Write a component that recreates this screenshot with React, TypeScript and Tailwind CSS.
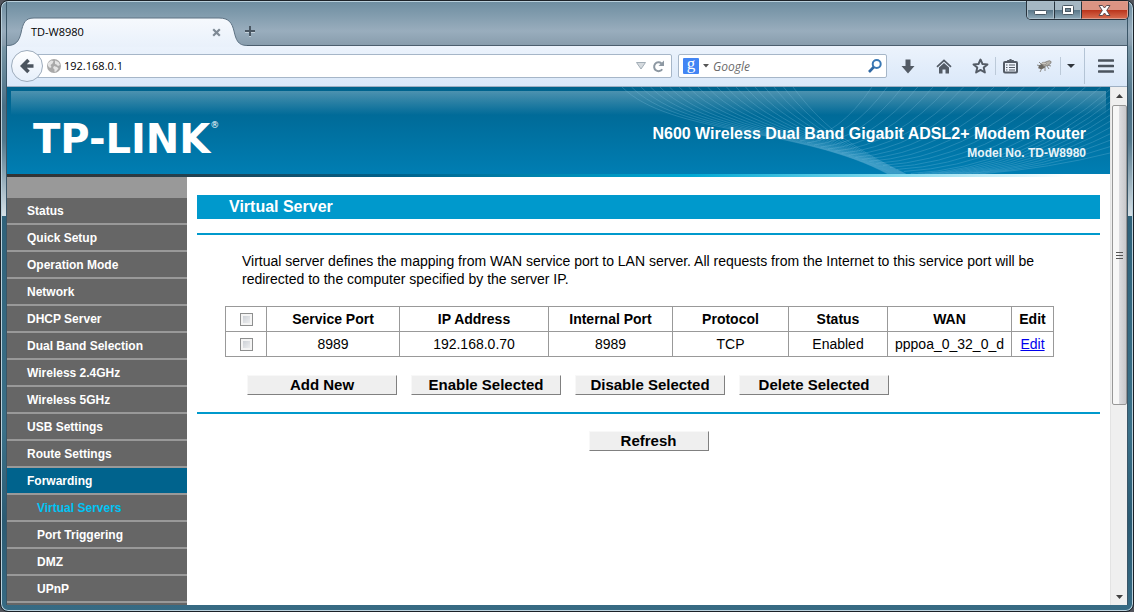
import type { ReactNode } from "react";

const menu = [
  "Status",
  "Quick Setup",
  "Operation Mode",
  "Network",
  "DHCP Server",
  "Dual Band Selection",
  "Wireless 2.4GHz",
  "Wireless 5GHz",
  "USB Settings",
  "Route Settings",
  "Forwarding",
];
const submenu = ["Virtual Servers", "Port Triggering", "DMZ", "UPnP"];

function TitleBar() {
  return (
    <div className="flex h-11 shrink-0 items-end">
      <div className="relative flex h-7 w-[238px] shrink-0 items-center">
        <svg className="absolute -bottom-px left-0" width="240" height="30" viewBox="0 0 240 30" aria-hidden="true">
          <defs>
            <linearGradient id="tab" x1="0" y1="0" x2="0" y2="1">
              <stop offset="0" stopColor="#f6f9fd" />
              <stop offset="1" stopColor="#e9f1fb" />
            </linearGradient>
          </defs>
          <path d="M0 29C9 29 12 24 14 16C16 6 18 1 27 1H212C222 1 225 6 227 14C229 23 231 28.500 240 28.500V30H0Z" fill="url(#tab)" />
          <path d="M0 28.500C9 28.500 12 24 14 16C16 6 18 1 27 1H212C222 1 225 6 227 14C229 23 231 28.500 240 28.500" fill="none" stroke="#5e7384" strokeWidth="1" />
        </svg>
        <span className="relative flex-1 pl-6 text-[11px] text-black">TD-W8980</span>
        <button aria-label="Close tab" className="relative mr-6">
          <svg width="9" height="9" viewBox="0 0 9 9">
            <path d="M1.200 1.200L7.800 7.800M7.800 1.200L1.200 7.800" stroke="#7f8a95" strokeWidth="2.200" />
          </svg>
        </button>
      </div>
      <div className="flex h-7 flex-1 items-center border-b border-[#4b5e6e]">
        <button aria-label="New tab">
          <svg width="10" height="11" viewBox="0 0 10 11">
            <path d="M5 1V11M0 6H10" stroke="#c3d0da" strokeWidth="2" />
            <path d="M5 0V10M0 5H10" stroke="#4a5763" strokeWidth="2" />
          </svg>
        </button>
      </div>
    </div>
  );
}

function WindowButtons() {
  return (
    <div className="absolute right-1 top-0 flex h-[19px] overflow-hidden rounded-b-[5px] border border-t-0 border-[#27333d]">
      <button aria-label="Minimize" className="flex w-[27px] items-end justify-center border border-[#a9bcc8] bg-linear-to-b from-[#a5b7c3] from-50% via-[#587587] via-50% to-[#8aa5b4] pb-[3px]">
        <svg width="13" height="5" viewBox="0 0 13 5"><rect x=".5" y=".5" width="12" height="4" rx="1" fill="#fff" stroke="#4a5964" /></svg>
      </button>
      <button aria-label="Maximize" className="flex w-[27px] items-center justify-center border border-l-[#27333d] border-[#a9bcc8] bg-linear-to-b from-[#a5b7c3] from-50% via-[#587587] via-50% to-[#8aa5b4]">
        <svg width="12" height="10" viewBox="0 0 12 10">
          <rect x=".5" y=".5" width="11" height="9" rx="1" fill="#fff" stroke="#4a5964" />
          <rect x="3.500" y="3.500" width="5" height="3" fill="#718897" stroke="#4a5964" />
        </svg>
      </button>
      <button aria-label="Close" className="flex w-[47px] items-center justify-center border border-l-[#27333d] border-[#dd9c8c] bg-linear-to-b from-[#dc9483] from-50% via-[#b93219] via-50% to-[#d5674b]">
        <svg width="13" height="11" viewBox="0 0 13 11">
          <path d="M1 .5H4.500L6.500 3L8.500 .5H12L8.700 5.500L12 10.500H8.500L6.500 8L4.500 10.500H1L4.300 5.500Z" fill="#fff" stroke="#5b4a4d" />
        </svg>
      </button>
    </div>
  );
}

function Sep({ tall = false }: { tall?: boolean }) {
  return <span className={tall ? "h-9 w-px shrink-0 bg-[#b4c4d5]" : "h-[18px] w-px shrink-0 bg-[#bccad9]"} />;
}

function Tool({ label, className, children }: { label: string; className: string; children: ReactNode }) {
  return (
    <button aria-label={label} className={"flex h-7 shrink-0 items-center justify-center " + className}>
      {children}
    </button>
  );
}

function Toolbar() {
  return (
    <div className="flex h-[41px] shrink-0 items-center border-b border-[#9fb0c3] bg-linear-to-b from-[#ecf3fc] to-[#dae8f9] pl-1">
      <button aria-label="Back" className="z-10 flex size-8 shrink-0 items-center justify-center rounded-full border border-[#9dacbc] bg-linear-to-b from-white to-[#e6effa]">
        <svg width="14" height="16" viewBox="0 0 14 16">
          <path d="M8.500 2L2.500 8L8.500 14M3 8H13.500" fill="none" stroke="#4b545e" strokeWidth="3.600" />
        </svg>
      </button>
      <div className="-ml-2 flex h-6 flex-1 items-center rounded-r-[2px] border border-[#a6b6c8] bg-white pl-[11px] pr-1.5">
        <svg width="14" height="14" viewBox="0 0 14 14" aria-hidden="true">
          <circle cx="7" cy="7" r="7" fill="#a9a9a9" />
          <path d="M1 4L4 1.500L6.500 2L5.500 4.500L3.500 6L4.500 8L3 9L1 7ZM8 1.500L11.500 3L13 6L11 7L9.500 5.500L8 5ZM7 7L10 8L11.500 9.500L9 12.500L7.500 13L7.500 10.500L6 9Z" fill="#e4e4e4" />
        </svg>
        <input aria-label="Address" defaultValue="192.168.0.1" className="ml-[3px] min-w-0 flex-1 bg-transparent text-[11px] text-black outline-none" />
        <svg width="10" height="8" viewBox="0 0 10 8" aria-hidden="true">
          <path d="M.5 .5H9.500L5 7Z" fill="#d5dade" stroke="#a2adb6" />
        </svg>
        <button aria-label="Reload" className="ml-1.5">
          <svg width="13" height="13" viewBox="0 0 13 13">
            <path d="M10.200 9.200A4.400 4.400 0 1 1 9.500 3.500" fill="none" stroke="#8d98a2" strokeWidth="2" />
            <path d="M12 .5V6H6.500Z" fill="#8d98a2" />
          </svg>
        </button>
      </div>
      <div className="ml-1.5 flex h-6 w-[209px] shrink-0 items-center rounded-[2px] border border-[#a6b6c8] bg-white px-1">
        <span className="flex size-4 shrink-0 items-center justify-center rounded-[1px] bg-[#4285f4] pb-1 font-['Liberation_Serif',serif] text-[17px] leading-4 text-white">g</span>
        <svg className="ml-1" width="6" height="4" viewBox="0 0 6 4" aria-hidden="true"><path d="M0 0H6L3 3.500Z" fill="#555" /></svg>
        <input aria-label="Search" placeholder="Google" className="ml-1 min-w-0 flex-1 bg-transparent pt-0.5 text-[12px] italic outline-none placeholder:text-[#6b6b6b]" />
        <button aria-label="Go">
          <svg width="14" height="14" viewBox="0 0 14 14">
            <circle cx="8.700" cy="5" r="4" fill="none" stroke="#3a78b4" strokeWidth="2" />
            <path d="M5.800 8L1 13" stroke="#2f68a4" strokeWidth="2.600" />
          </svg>
        </button>
      </div>
      <Tool label="Downloads" className="ml-[3px] w-9">
        <svg width="14" height="15" viewBox="0 0 14 15"><path d="M4.500 .5H9.500V7H13.500L7 14.500L.5 7H4.500Z" fill="#535b65" /></svg>
      </Tool>
      <Tool label="Home" className="w-9">
        <svg width="16" height="15" viewBox="0 0 16 15">
          <path d="M1 7.800L8 1.300L15 7.800" fill="none" stroke="#535b65" strokeWidth="1.700" />
          <path d="M3 8.500L8 4L13 8.500V14.500H9.500V10.500H6.500V14.500H3Z" fill="#535b65" />
        </svg>
      </Tool>
      <Tool label="Bookmark this page" className="w-[33px] pl-1">
        <svg width="17" height="16" viewBox="0 0 17 16">
          <path d="M8.500 1.500L10.500 6L15.500 6.400L11.700 9.600L12.900 14.500L8.500 11.900L4.100 14.500L5.300 9.600L1.500 6.400L6.500 6Z" fill="none" stroke="#535b65" strokeWidth="1.900" strokeLinejoin="round" />
        </svg>
      </Tool>
      <Sep />
      <Tool label="Bookmarks" className="w-7">
        <svg width="15" height="16" viewBox="0 0 15 16">
          <rect x="1" y="4" width="13" height="10.500" rx="1" fill="#eef4fc" stroke="#535b65" strokeWidth="2" />
          <path d="M4.500 4.500V2.500H6L7.500 1L9 2.500H10.500V4.500Z" fill="#535b65" stroke="#535b65" />
          <path d="M3 7H4.500M6 7H12M3 9.500H4.500M6 9.500H12M3 12H4.500M6 12H12" stroke="#535b65" strokeWidth="1.100" />
        </svg>
      </Tool>
      <Tool label="Add-on" className="ml-1 w-8">
        <svg width="16" height="14" viewBox="0 0 16 14">
          <path d="M1 6L5 7M2 9L6 8M4 13L6 9M9 12L9 8M13 10L11 7M3 3L6 6M15 7L11 6" stroke="#75726d" strokeWidth=".8" />
          <ellipse cx="6" cy="7.500" rx="3.500" ry="2.400" fill="#6b6862" transform="rotate(-20 6 7.500)" />
          <ellipse cx="11" cy="4.500" rx="4.500" ry="2" fill="#b5b2ab" stroke="#7d7a74" strokeWidth=".7" transform="rotate(-25 11 4.500)" />
          <ellipse cx="8" cy="4.500" rx="2.500" ry="1.300" fill="#c9c6bf" stroke="#77736d" strokeWidth=".5" />
        </svg>
      </Tool>
      <Sep />
      <Tool label="Add-on options" className="w-5">
        <svg width="8" height="4" viewBox="0 0 8 4"><path d="M0 0H8L4 4Z" fill="#2e343a" /></svg>
      </Tool>
      <span className="w-[3px]" />
      <Sep tall />
      <Tool label="Open menu" className="w-[42px]">
        <svg width="16" height="14" viewBox="0 0 16 14"><path d="M1 1.500H15M1 7H15M1 12.500H15" stroke="#4b545e" strokeWidth="2.600" strokeLinecap="round" /></svg>
      </Tool>
    </div>
  );
}

function Waves() {
  const falling = Array.from({ length: 19 }, (_, i) => {
    const t = i / 18;
    return `M${12 + 171 * t} 0C${60 + 150 * t} ${48 - 12 * t} ${190 + 46 * t} ${40 + 18 * t} ${278 + 18 * t} 87`;
  });
  const rising = Array.from({ length: 27 }, (_, i) => {
    const s = i / 26;
    const x = 190 + 180 * s;
    const y = 54 + 33 * Math.min(1, s * 1.6);
    const ex = s < 0.6 ? 262 + (s / 0.6) * 238 : 500;
    const ey = s < 0.6 ? 0 : ((s - 0.6) / 0.4) * 66;
    return `M${x} ${y}Q${x + (ex - x) * 0.55} ${y - 6} ${ex} ${ey}`;
  });
  return (
    <svg className="absolute right-0 top-0" width="500" height="87" viewBox="0 0 500 87" aria-hidden="true">
      <g fill="none" stroke="#8ccbe8" strokeOpacity=".28" strokeWidth=".9">
        {[...falling, ...rising].map((d) => (
          <path key={d} d={d} />
        ))}
      </g>
    </svg>
  );
}

function Banner() {
  return (
    <header className="shrink-0">
      <div className="relative h-[87px] bg-linear-to-b from-[#00628c] to-[#007eb3] px-1 pt-1">
        <Waves />
        <div className="h-6 bg-linear-to-b from-white/30 to-white/0" />
        <div className="relative flex items-start justify-between pl-[22px] pr-5 text-white">
          <div className="flex items-start font-['DejaVu_Sans',sans-serif] text-[40px] font-bold leading-[48px]">
            TP-LINK<span className="pt-1 text-[9px] font-normal leading-3">®</span>
          </div>
          <div className="pt-[9px] text-right font-bold">
            <h1 className="text-[16px] leading-5">N600 Wireless Dual Band Gigabit ADSL2+ Modem Router</h1>
            <p className="text-[12px] leading-[18px] text-[#e8f3f8]">Model No. TD-W8980</p>
          </div>
        </div>
      </div>
      <div className="h-[3px] bg-[linear-gradient(90deg,#333_0%,#2c3a42_12%,#00628c_35%,#00a8d3_62%,#7fd8ec_80%,#fff_96%)]" />
    </header>
  );
}

function Sidebar() {
  return (
    <nav className="w-[180px] shrink-0 overflow-hidden bg-[#999] pt-[21px] text-[12px] font-bold leading-6 text-white">
      <ul>
        {menu.map((item) => (
          <li key={item} className={item === "Forwarding" ? "mb-0.5 bg-[#00638d] pl-5 pt-px" : "mb-0.5 bg-[#666] pl-5 pt-px"}>
            <a href="#" className="block">{item}</a>
          </li>
        ))}
        {submenu.map((item, i) => (
          <li key={item} className={i === 0 ? "mb-0.5 bg-[#666] pl-[30px] pt-px text-[#00c4f5]" : "mb-0.5 bg-[#666] pl-[30px] pt-px"}>
            <a href="#" className="block">{item}</a>
          </li>
        ))}
        <li className="h-6 bg-[#666]" />
      </ul>
    </nav>
  );
}

function Check({ label }: { label: string }) {
  return (
    <input
      type="checkbox"
      aria-label={label}
      className="mx-auto block size-[13px] appearance-none border border-[#8e8f8f] bg-linear-to-br from-[#c3c8cf] to-[#f6f6f6] shadow-[inset_0_0_0_2px_#f4f4f4]"
    />
  );
}

function ActionButton({ children, small = false }: { children: string; small?: boolean }) {
  return (
    <button
      className={
        (small ? "w-[120px]" : "w-[150px]") +
        " h-5 border border-b-[#808080] border-r-[#808080] border-l-[#f8f8f8] border-t-[#f8f8f8] bg-[#efefef] text-[15px] font-bold leading-[18px] text-black"
      }
    >
      {children}
    </button>
  );
}

function ServerTable() {
  const cell = "border border-[#999] p-0";
  const heads = ["Service Port", "IP Address", "Internal Port", "Protocol", "Status", "WAN", "Edit"];
  const row = ["8989", "192.168.0.70", "8989", "TCP", "Enabled", "pppoa_0_32_0_d"];
  return (
    <table className="ml-7 mt-[18px] w-[829px] table-fixed border-collapse text-center text-[14px] leading-6">
      <colgroup>
        <col className="w-[41px]" />
        <col className="w-[133px]" />
        <col className="w-[149px]" />
        <col className="w-[124px]" />
        <col className="w-[116px]" />
        <col className="w-[99px]" />
        <col className="w-[124px]" />
        <col className="w-[42px]" />
      </colgroup>
      <thead>
        <tr>
          <th className={cell}><Check label="Select all" /></th>
          {heads.map((h) => (
            <th key={h} className={cell}>{h}</th>
          ))}
        </tr>
      </thead>
      <tbody>
        <tr>
          <td className={cell}><Check label="Select port 8989" /></td>
          {row.map((v, i) => (
            <td key={i} className={cell}>{v}</td>
          ))}
          <td className={cell}><a href="#" className="text-[#0000ee] underline">Edit</a></td>
        </tr>
      </tbody>
    </table>
  );
}

function ScrollBar() {
  return (
    <div className="flex w-[17px] shrink-0 flex-col items-center border-l border-[#e3e3e3] bg-[#efefef]">
      <div className="flex h-[18px] w-full items-center justify-center">
        <svg width="7" height="4" viewBox="0 0 7 4" aria-hidden="true"><path d="M0 4L3.500 0L7 4Z" fill="#404040" /></svg>
      </div>
      <div className="flex h-[300px] w-[15px] flex-col items-center justify-center gap-0.5 rounded-[2px] border border-[#979797] bg-linear-to-r from-[#f7f7f7] from-45% via-[#dcdcdf] via-50% to-[#c8c8cb]">
        <span className="h-px w-[7px] bg-[#555]" />
        <span className="h-px w-[7px] bg-[#555]" />
        <span className="h-px w-[7px] bg-[#555]" />
      </div>
      <div className="mt-auto flex h-[17px] w-full items-center justify-center">
        <svg width="7" height="4" viewBox="0 0 7 4" aria-hidden="true"><path d="M0 0L3.500 4L7 0Z" fill="#404040" /></svg>
      </div>
    </div>
  );
}

export default function App() {
  return (
    <div className="h-screen bg-[#51545c] font-['Open_Sans',sans-serif]">
      <div className="relative flex h-full flex-col overflow-hidden rounded-lg border border-[#1c2228] bg-[linear-gradient(180deg,#6d8da0_0px,#99adbd_30px,#889dad_44px,#7896a6_46px,#4a7086_105px,#54798d_140px,#d6e0e6_215px,#2f627a_215px,#3b7189_430px,#2b5b73_520px,#376b84_100%)] px-[5px] pb-1.5 shadow-[inset_0_0_0_1px_#b9d0dc]">
        <div className="mt-px flex min-h-0 flex-1 flex-col border-x border-[#3a5567]">
          <TitleBar />
          <Toolbar />
          <div className="flex min-h-0 flex-1 bg-white">
            <div className="flex min-w-0 flex-1 flex-col overflow-hidden font-['Liberation_Sans',Arial,sans-serif] text-black">
              <Banner />
              <div className="flex min-h-0 flex-1">
                <Sidebar />
                <main className="min-w-0 flex-1 px-2.5 pt-[18px]">
                  <h2 className="bg-[#0099cc] pl-8 text-[16px] font-bold leading-6 text-white">Virtual Server</h2>
                  <div className="mt-3.5 h-0.5 bg-[#0099cc]" />
                  <p className="mt-[17px] pl-[45px] pr-10 text-[14px] leading-[18px]">
                    Virtual server defines the mapping from WAN service port to LAN server. All requests from the Internet to this service port will be redirected to the computer specified by the server IP.
                  </p>
                  <ServerTable />
                  <div className="mt-[18px] flex gap-3.5 pl-[50px]">
                    <ActionButton>Add New</ActionButton>
                    <ActionButton>Enable Selected</ActionButton>
                    <ActionButton>Disable Selected</ActionButton>
                    <ActionButton>Delete Selected</ActionButton>
                  </div>
                  <div className="mt-[17px] h-0.5 bg-[#0099cc]" />
                  <div className="mt-[17px] flex justify-center">
                    <ActionButton small>Refresh</ActionButton>
                  </div>
                </main>
              </div>
            </div>
            <ScrollBar />
          </div>
        </div>
        <WindowButtons />
      </div>
    </div>
  );
}
